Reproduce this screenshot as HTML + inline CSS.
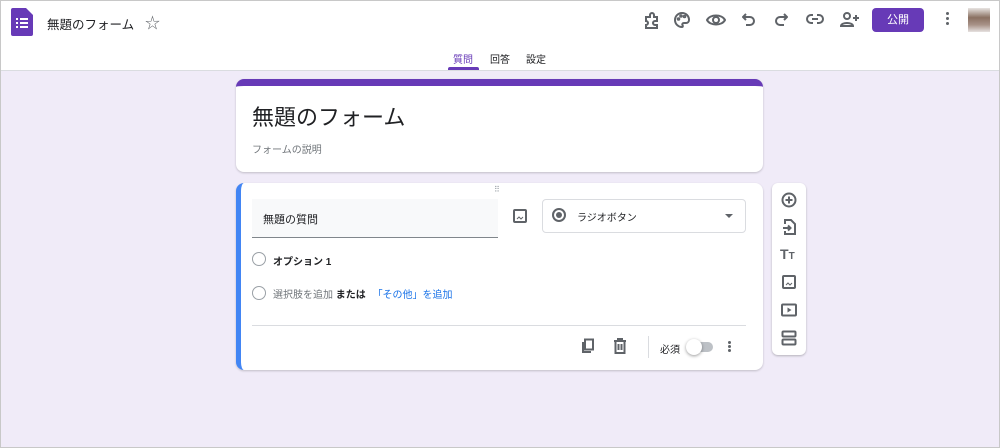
<!DOCTYPE html><html><head><meta charset="utf-8"><style>
*{box-sizing:border-box;margin:0;padding:0}
body{width:1000px;height:448px;overflow:hidden;background:#f0ebf8;font-family:"Liberation Sans","Noto Sans CJK JP",sans-serif;color:#202124;position:relative}
.a{position:absolute}
svg{position:absolute;fill:none;stroke:#5f6368;stroke-width:2}
</style></head><body>
<div class="a" style="left:0;top:0;width:1000px;height:71px;background:#fff;border-bottom:1px solid #dadce0"></div>
<svg style="left:11px;top:8px;stroke:none" width="22" height="28" viewBox="0 0 22 28"><path d="M0 2a2 2 0 0 1 2-2h13l7 7v19a2 2 0 0 1-2 2H2a2 2 0 0 1-2-2z" fill="#673ab7"/><g fill="#fff"><rect x="5" y="10" width="2" height="2"/><rect x="9" y="10" width="8" height="2"/><rect x="5" y="14" width="2" height="2"/><rect x="9" y="14" width="8" height="2"/><rect x="5" y="18" width="2" height="2"/><rect x="9" y="18" width="8" height="2"/></g></svg>
<div class="a" style="left:47px;top:14px;font-size:12.5px">無題のフォーム</div>
<div class="a" style="left:145px;top:12px;font-size:15px;color:#5f6368">☆</div>
<svg style="left:643px;top:12px" width="18" height="18" viewBox="0 0 18 18" stroke-width="1.5"><path d="M3 5h4V3a2 2 0 0 1 4 0v2h3v4h-2a2 2 0 0 0 0 4h2v3H3v-3a2 2 0 0 0 0-4z"/></svg>
<svg style="left:673px;top:11px" width="18" height="18" viewBox="0 0 18 18" stroke-width="1.5"><path d="M9 2a7 7 0 0 0 0 14c1 0 1-1 .5-2s0-2 1.5-2h2a3 3 0 0 0 3-3C16 5 13 2 9 2z"/><circle cx="5.5" cy="8" r=".8"/><circle cx="8" cy="5" r=".8"/><circle cx="11.5" cy="5.5" r=".8"/></svg>
<svg style="left:706px;top:12px" width="20" height="16" viewBox="0 0 20 16" stroke-width="1.5"><path d="M1 8c3-6 15-6 18 0-3 6-15 6-18 0z"/><circle cx="10" cy="8" r="3"/></svg>
<svg style="left:742px;top:12px" width="14" height="16" viewBox="0 0 14 16" stroke-width="1.5"><path d="M4 2L1 5l3 3M1 5h7a4 4 0 0 1 0 8H4"/></svg>
<svg style="left:774px;top:12px" width="14" height="16" viewBox="0 0 14 16" stroke-width="1.5"><path d="M10 2l3 3-3 3M13 5H6a4 4 0 0 0 0 8h4"/></svg>
<svg style="left:806px;top:13px" width="18" height="12" viewBox="0 0 18 12" stroke-width="1.5"><path d="M7 2H5a4 4 0 0 0 0 8h2M11 2h2a4 4 0 0 1 0 8h-2M6 6h6"/></svg>
<svg style="left:840px;top:11px" width="20" height="16" viewBox="0 0 20 16" stroke-width="1.5"><circle cx="7" cy="5" r="3"/><path d="M1 15c0-4 12-4 12 0zM16 4v6M13 7h6"/></svg>
<div class="a" style="left:872px;top:8px;width:52px;height:24px;background:#673ab7;border-radius:4px;color:#fff;font-size:11px;text-align:center;line-height:24px">公開</div>
<div class="a" style="left:946px;top:12px;width:3px;height:3px;background:#5f6368;border-radius:2px;box-shadow:0 5px #5f6368,0 10px #5f6368"></div>
<div class="a" style="left:968px;top:8px;width:22px;height:24px;background:linear-gradient(#e8e4e2,#8a7061 40%,#a89288 70%,#e6e2e0)"></div>
<div class="a" style="left:453px;top:51px;font-size:10px;color:#673ab7">質問</div>
<div class="a" style="left:448px;top:67px;width:31px;height:3px;background:#673ab7;border-radius:2px 2px 0 0"></div>
<div class="a" style="left:490px;top:51px;font-size:10px;color:#202124">回答</div>
<div class="a" style="left:526px;top:51px;font-size:10px;color:#202124">設定</div>
<div class="a" style="left:236px;top:79px;width:527px;height:93px;background:#fff;border-radius:8px;border-top:7px solid #673ab7;box-shadow:0 1px 2px rgba(0,0,0,.2)"></div>
<div class="a" style="left:252px;top:100px;font-size:22px">無題のフォーム</div>
<div class="a" style="left:252px;top:141px;font-size:10px;color:#70757a">フォームの説明</div>
<div class="a" style="left:236px;top:183px;width:527px;height:187px;background:#fff;border-radius:8px;border-left:5px solid #4285f4;box-shadow:0 1px 2px rgba(0,0,0,.2)"></div>
<div class="a" style="left:494px;top:185px;font-size:8px;color:#9aa0a6;letter-spacing:-1px">⠿</div>
<div class="a" style="left:252px;top:199px;width:246px;height:39px;background:#f8f9fa;border-bottom:1px solid #80868b"></div>
<div class="a" style="left:263px;top:211px;font-size:11px">無題の質問</div>
<svg style="left:513px;top:209px" width="14" height="14" viewBox="0 0 14 14" stroke-width="1.5"><rect x="1" y="1" width="12" height="12" rx="1"/><path d="M4 10l2-2 2 2 2-2" stroke-width="1"/></svg>
<div class="a" style="left:542px;top:199px;width:204px;height:34px;border:1px solid #dadce0;border-radius:4px"></div>
<div class="a" style="left:552px;top:208px;width:14px;height:14px;border:2px solid #5f6368;border-radius:50%"></div>
<div class="a" style="left:556px;top:212px;width:6px;height:6px;background:#5f6368;border-radius:50%"></div>
<div class="a" style="left:577px;top:209px;font-size:10px">ラジオボタン</div>
<div class="a" style="left:725px;top:214px;border:4px solid transparent;border-top:4px solid #5f6368"></div>
<div class="a" style="left:252px;top:252px;width:14px;height:14px;border:1.5px solid #9aa0a6;border-radius:50%"></div>
<div class="a" style="left:273px;top:253px;font-size:10px;font-weight:bold">オプション 1</div>
<div class="a" style="left:252px;top:286px;width:14px;height:14px;border:1.5px solid #9aa0a6;border-radius:50%"></div>
<div class="a" style="left:273px;top:286px;font-size:10px;color:#70757a">選択肢を追加 <span style="color:#202124;font-weight:bold">または</span> <span style="color:#1a73e8;margin-left:4px">「その他」を追加</span></div>
<div class="a" style="left:252px;top:325px;width:494px;height:1px;background:#dadce0"></div>
<svg style="left:580px;top:338px" width="16" height="16" viewBox="0 0 16 16" stroke-width="1.5"><path d="M3 4v10h8"/><rect x="5" y="1.5" width="8" height="10"/></svg>
<svg style="left:613px;top:338px" width="14" height="16" viewBox="0 0 14 16" stroke-width="1.5"><path d="M1 3h12M5 3V1h4v2M2.5 3v12h9V3M5.5 6v6M8.5 6v6"/></svg>
<div class="a" style="left:648px;top:336px;width:1px;height:22px;background:#dadce0"></div>
<div class="a" style="left:660px;top:341px;font-size:10px">必須</div>
<div class="a" style="left:691px;top:342px;width:22px;height:10px;background:#bdc1c6;border-radius:5px"></div>
<div class="a" style="left:686px;top:339px;width:16px;height:16px;background:#fff;border-radius:50%;box-shadow:0 1px 3px rgba(0,0,0,.4)"></div>
<div class="a" style="left:728px;top:341px;width:3px;height:3px;background:#5f6368;border-radius:2px;box-shadow:0 4px #5f6368,0 8px #5f6368"></div>
<div class="a" style="left:772px;top:183px;width:34px;height:172px;background:#fff;border-radius:6px;box-shadow:0 1px 2px rgba(0,0,0,.25)"></div>
<svg style="left:781px;top:192px" width="16" height="16" viewBox="0 0 16 16" stroke-width="1.5"><circle cx="8" cy="8" r="6.5"/><path d="M8 4.5v7M4.5 8h7"/></svg>
<svg style="left:782px;top:219px" width="14" height="16" viewBox="0 0 14 16" stroke-width="1.5"><path d="M3 5V1h6l4 4v10H3v-3M1 9h7M6 6.5L8.5 9 6 11.5"/></svg>
<div class="a" style="left:780px;top:246px;font-size:14px;font-weight:bold;color:#5f6368">T<span style="font-size:10px">T</span></div>
<svg style="left:782px;top:275px" width="14" height="14" viewBox="0 0 14 14" stroke-width="1.5"><rect x="1" y="1" width="12" height="12" rx="1"/><path d="M4 10l2-2 2 2 2-2" stroke-width="1"/></svg>
<svg style="left:781px;top:303px" width="16" height="14" viewBox="0 0 16 14" stroke-width="1.5"><rect x="1" y="1.5" width="14" height="11" rx="1"/><path d="M6.5 4.5v5l4-2.5z" fill="#5f6368" stroke="none"/></svg>
<svg style="left:781px;top:330px" width="16" height="16" viewBox="0 0 16 16" stroke-width="1.5"><rect x="1.5" y="1.5" width="13" height="5" rx="1"/><rect x="1.5" y="9.5" width="13" height="5" rx="1"/></svg>
<div class="a" style="left:0;top:0;width:1000px;height:448px;border:1px solid #c8c8c8"></div>
</body></html>
